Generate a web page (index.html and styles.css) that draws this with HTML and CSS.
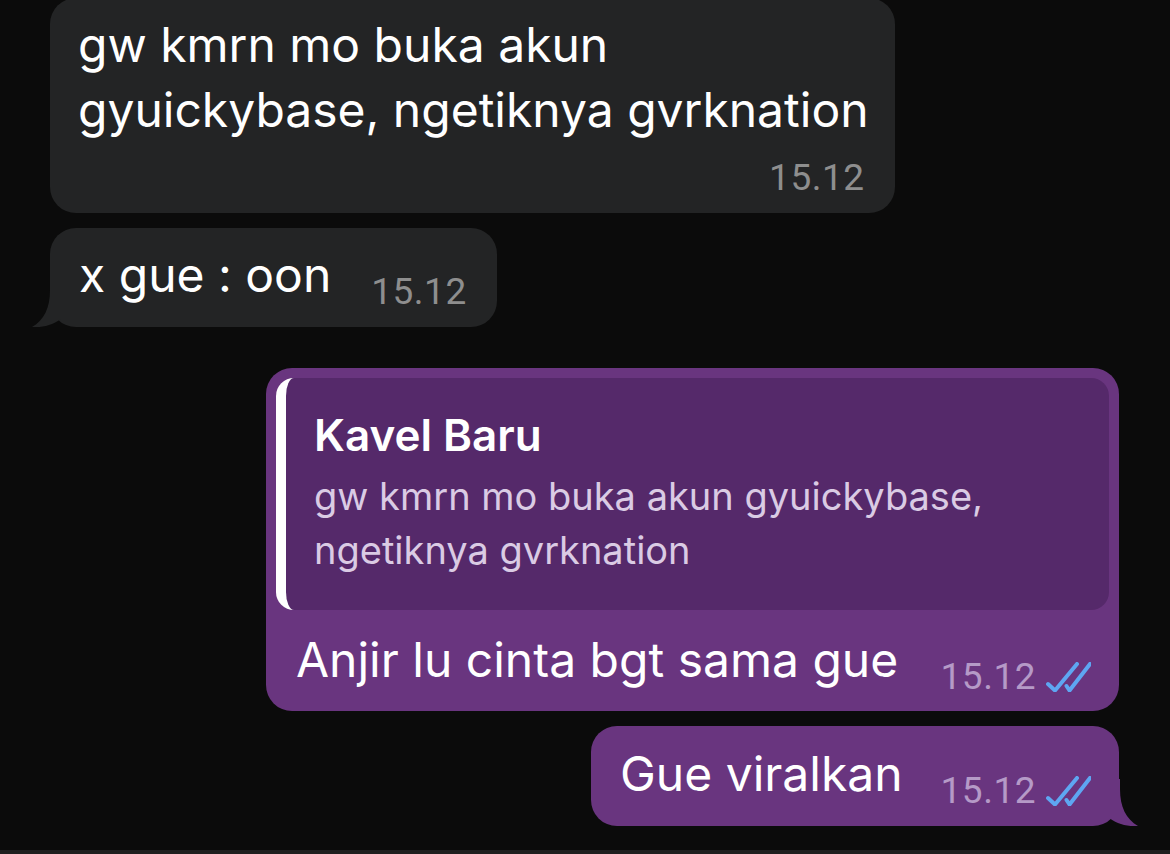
FILE: index.html
```html
<!DOCTYPE html>
<html lang="en">
  <head>
    <meta charset="UTF-8" />
    <title>Chat</title>
    <link rel="stylesheet" href="styles.css">
  </head>
  <body>
    <div class="chat">
      <div class="bubble incoming first">
        <div class="text">gw kmrn mo buka akun<br />gyuickybase, ngetiknya gvrknation</div>
        <div class="meta meta-block"><span class="time">15.12</span></div>
      </div>

      <div class="bubble incoming row-bubble with-tail">
        <div class="text">x gue : oon</div>
        <div class="meta"><span class="time">15.12</span></div>
        <svg class="tail tail-left" viewBox="0 0 30 47" width="30" height="47">
          <path d="M18 0 L18 10 C18 28 12 40 0 47 C12 48 23 44 30 38 L30 0 Z" fill="currentColor" />
        </svg>
      </div>

      <div class="bubble outgoing reply-bubble">
        <div class="reply">
          <div class="reply-name">Kavel Baru</div>
          <div class="reply-text">gw kmrn mo buka akun gyuickybase,<br />ngetiknya gvrknation</div>
        </div>
        <div class="reply-row">
          <div class="text">Anjir lu cinta bgt sama gue</div>
          <div class="meta">
            <span class="time">15.12</span>
            <svg class="checks" viewBox="0 0 46 30" width="46" height="30">
              <path d="M3 22 L10 28.5 L32 2" />
              <path d="M21.5 24 L24.5 28.5 L45 2" />
            </svg>
          </div>
        </div>
      </div>

      <div class="bubble outgoing row-bubble with-tail">
        <div class="text">Gue viralkan</div>
        <div class="meta">
          <span class="time">15.12</span>
          <svg class="checks" viewBox="0 0 46 30" width="46" height="30">
            <path d="M3 22 L10 28.5 L32 2" />
            <path d="M21.5 24 L24.5 28.5 L45 2" />
          </svg>
        </div>
        <svg class="tail tail-right" viewBox="0 0 30 47" width="30" height="47">
          <path d="M12 0 L12 10 C12 28 18 40 30 47 C18 48 7 44 0 38 L0 0 Z" fill="currentColor" />
        </svg>
      </div>
    </div>
    <div class="bottom-edge"></div>
  </body>
</html>
```

FILE: styles.css
```css
html,
body {
  height: 100%;
}

body {
  margin: 0;
  background: #0b0b0b;
  font-family: "Inter", "Liberation Sans", sans-serif;
  color: #fff;
  display: flex;
  flex-direction: column;
  overflow: hidden;
}

.chat {
  flex: 1;
  display: flex;
  flex-direction: column;
  padding: 0 51px 0 50px;
  margin-top: -2px;
}

.bubble {
  position: relative;
  border-radius: 26px;
  box-sizing: border-box;
}

.incoming {
  align-self: flex-start;
  background: #232425;
  color: #fff;
}

.outgoing {
  align-self: flex-end;
  background: #69357f;
}

.text {
  font-size: 48px;
  line-height: 65px;
  white-space: nowrap;
}

.first {
  padding: 14px 26px 20px 28px;
}

.row-bubble {
  display: flex;
  align-items: flex-end;
  gap: 40px;
}

.incoming.row-bubble {
  margin-top: 15px;
  padding: 14px 30px 20px 29px;
}

.outgoing.row-bubble {
  margin-top: 15px;
  gap: 38px;
  padding: 15px 28px 20px 29px;
}

.meta {
  display: flex;
  align-items: flex-end;
  line-height: 30px;
}

.meta-block {
  justify-content: flex-end;
  margin-top: 21px;
  margin-right: 4px;
}

.time {
  font-family: "Roboto", "Liberation Sans", sans-serif;
  font-size: 37px;
  letter-spacing: 0.5px;
  color: #8e8e8e;
}

.outgoing .time {
  color: #b59ac7;
}

.checks {
  display: block;
  margin-left: 9px;
  fill: none;
  stroke: #5ea6f2;
  stroke-width: 4;
  stroke-linecap: round;
  stroke-linejoin: round;
}

.tail {
  position: absolute;
  bottom: 0;
  display: block;
}

.tail-left {
  left: -18px;
  color: #232425;
}

.tail-right {
  right: -19px;
  color: #69357f;
}

.reply-bubble {
  width: 853px;
  margin-top: 41px;
  padding: 10px 10px 19px;
}

.reply {
  background: #55296a;
  border-left: 10px solid #fff;
  border-radius: 18px;
  padding: 31px 20px 33px 28px;
}

.reply-name {
  font-size: 44px;
  font-weight: 600;
  line-height: 52px;
  margin-bottom: 8px;
}

.reply-text {
  font-size: 38px;
  line-height: 54px;
  color: #dacbe4;
  white-space: nowrap;
}

.reply-row {
  display: flex;
  align-items: flex-end;
  justify-content: space-between;
  gap: 40px;
  margin-top: 17px;
  padding: 0 18px 0 20px;
}

.bottom-edge {
  height: 4px;
  background: #1f1f1f;
}
```
